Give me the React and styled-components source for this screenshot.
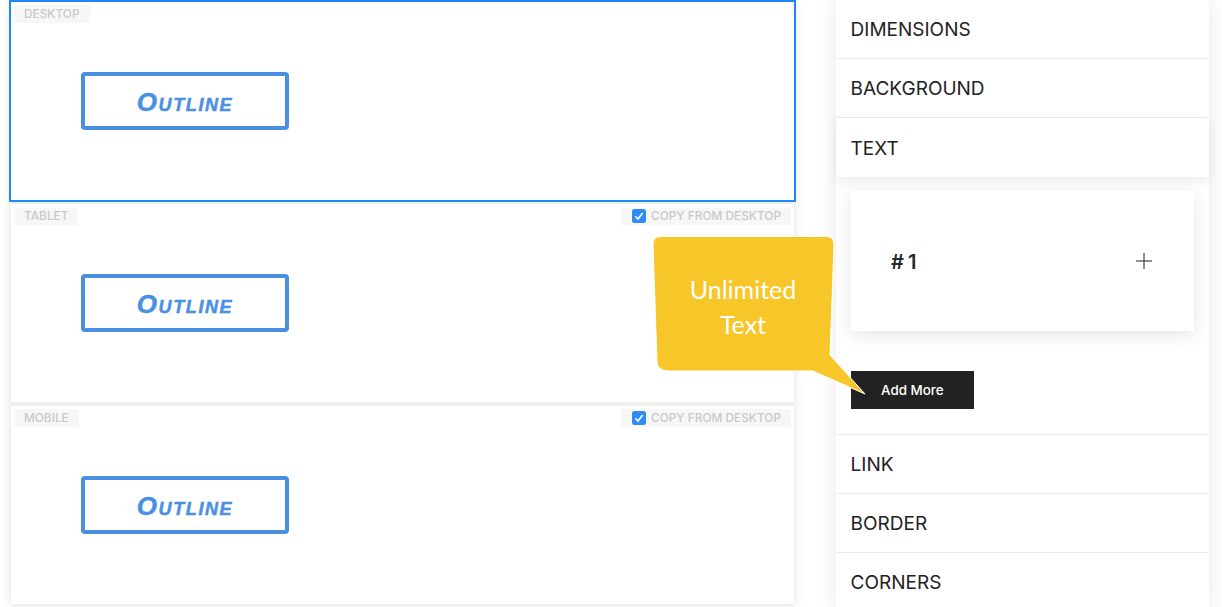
import React from "react";
import styled, { createGlobalStyle } from "styled-components";

const Global = createGlobalStyle`
  html, body { margin: 0; padding: 0; background: #fff; overflow: hidden; }
  body { font-family: Inter, "Liberation Sans", sans-serif; }
  * { box-sizing: border-box; }
`;

const Page = styled.div`
  position: relative;
  display: flex;
  align-items: flex-start;
  width: 1222px;
  height: 607px;
  overflow: hidden;
  padding-left: 11px;
`;

const Canvas = styled.div`
  display: flex;
  flex-direction: column;
  gap: 4px;
  width: 783px;
  padding: 2px 0;
  background: #efefef;
  box-shadow: 0 0 10px rgba(0, 0, 0, 0.12);
`;

const Frame = styled.section`
  height: 198px;
  padding: 3px;
  background: #fff;
  outline: ${(p) => (p.$selected ? "2px solid #1f87f7" : "none")};
`;

const TagRow = styled.div`
  display: flex;
  justify-content: space-between;
  height: 18px;
`;

const Tag = styled.div`
  display: flex;
  align-items: center;
  gap: 5px;
  height: 18px;
  padding: 1px 10px 0;
  background: #f7f7f7;
  color: #c9c9c9;
  font-size: 11.8px;
  font-weight: 500;
  line-height: 17px;
  letter-spacing: 0.03px;
`;

const Check = styled.svg`
  display: block;
  width: 14px;
  height: 14px;
  margin: -1px 0 0 1px;
`;

const OutlineButton = styled.div`
  display: flex;
  align-items: center;
  justify-content: center;
  width: 208px;
  height: 58px;
  margin: 49px 0 0 67px;
  padding-top: 2px;
  border: 4px solid #4a90e2;
  border-radius: 4px;
  color: #4a90e2;
  font-family: "Liberation Sans", sans-serif;
  font-size: 26px;
  font-weight: 700;
  font-style: italic;
  font-variant: small-caps;
  letter-spacing: 1.6px;
  -webkit-text-stroke: 0.5px #4a90e2;
`;

const Panel = styled.aside`
  width: 373px;
  margin-left: 42px;
  background: #fff;
  box-shadow: 0 0 20px rgba(0, 0, 0, 0.09);
`;

const Row = styled.div`
  display: flex;
  align-items: center;
  height: 59px;
  padding: 2px 15px 0 14.6px;
  border-bottom: 1px solid #ececec;
  color: #222;
  font-size: 19px;
  line-height: 24px;
  ${(p) => p.$open && "border-bottom: 0; box-shadow: 0 4px 12px rgba(0,0,0,0.08); position: relative;"}
`;

const Body = styled.div`
  height: 258px;
  padding: 14px 15px 0;
  border-bottom: 1px solid #ececec;
`;

const Card = styled.div`
  display: flex;
  align-items: center;
  justify-content: space-between;
  width: 343px;
  height: 140px;
  padding: 0 40px;
  background: #fff;
  box-shadow: 0 4px 16px rgba(0, 0, 0, 0.1);
`;

const CardTitle = styled.div`
  padding-top: 2px;
  color: #23282d;
  font-size: 20px;
  font-weight: 600;
  word-spacing: -1px;
`;

const Plus = styled.svg`
  display: block;
  width: 18px;
  height: 18px;
  margin-right: 1px;
`;

const AddMore = styled.button`
  display: block;
  width: 123px;
  height: 38px;
  margin-top: 40px;
  padding: 0 0 0 30px;
  border: 0;
  background: #222;
  color: #fff;
  font-family: inherit;
  font-size: 13.4px;
  font-weight: 500;
  text-align: left;
`;

const Callout = styled.div`
  position: absolute;
  left: 650px;
  top: 233px;
  width: 220px;
  height: 164px;
`;

const CalloutShape = styled.svg`
  position: absolute;
  inset: 0;
  display: block;
`;

const CalloutText = styled.div`
  position: absolute;
  left: 3px;
  top: 39px;
  width: 180px;
  color: #fff;
  font-family: Lato, "Open Sans", sans-serif;
  font-size: 25px;
  line-height: 35px;
  text-align: center;
`;

function Copy() {
  return (
    <Tag>
      <Check viewBox="0 0 14 14" aria-hidden="true">
        <rect width="14" height="14" rx="2.5" fill="#2f8cf4" />
        <path d="M3.4 7.4 L6 10 L10.6 4" fill="none" stroke="#fff" strokeWidth="1.5" />
      </Check>
      COPY FROM DESKTOP
    </Tag>
  );
}

function Device({ name, selected, copy }) {
  return (
    <Frame $selected={selected}>
      <TagRow>
        <Tag>{name}</Tag>
        {copy && <Copy />}
      </TagRow>
      <OutlineButton>Outline</OutlineButton>
    </Frame>
  );
}

export default function App() {
  return (
    <Page>
      <Global />
      <Canvas>
        <Device name="DESKTOP" selected />
        <Device name="TABLET" copy />
        <Device name="MOBILE" copy />
      </Canvas>
      <Panel>
        <Row>DIMENSIONS</Row>
        <Row>BACKGROUND</Row>
        <Row $open>TEXT</Row>
        <Body>
          <Card>
            <CardTitle># 1</CardTitle>
            <Plus viewBox="0 0 18 18" aria-hidden="true">
              <path d="M9 1 V17 M1 9 H17" stroke="#222" strokeWidth="1" fill="none" />
            </Plus>
          </Card>
          <AddMore>Add More</AddMore>
        </Body>
        <Row>LINK</Row>
        <Row>BORDER</Row>
        <Row>CORNERS</Row>
      </Panel>
      <Callout>
        <CalloutShape width="220" height="164" viewBox="0 0 220 164" aria-hidden="true">
          <path
            d="M11 3.5 H176 Q184 3.5 184 11.5 L180 122 L215 161 L163 138 H19 Q7 138 7 128 L3 11.5 Q3 3.5 11 3.5 Z"
            fill="#f7c628"
            stroke="#fff"
            strokeWidth="1"
          />
        </CalloutShape>
        <CalloutText>Unlimited<br />Text</CalloutText>
      </Callout>
    </Page>
  );
}
